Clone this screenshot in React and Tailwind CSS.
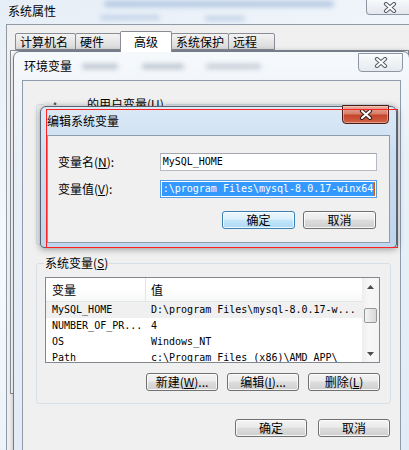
import React from 'react';

const cjk = "font-['Noto_Sans_CJK_SC','Microsoft_YaHei',sans-serif]";
const mono = "font-['DejaVu_Sans_Mono','Noto_Sans_CJK_SC',monospace]";

// little X used on the title bar close buttons
function CloseGlyph({ active }) {
  return (
    <svg width="14" height="11" viewBox="0 0 14 11">
      <path d="M3 2 L11 9 M11 2 L3 9" stroke={active ? '#3b2320' : '#5b6370'} strokeWidth="4.2" strokeLinecap="round" fill="none" />
      <path d="M3 2 L11 9 M11 2 L3 9" stroke="#ffffff" strokeWidth="2" strokeLinecap="round" fill="none" />
    </svg>
  );
}

function Btn({ children, className = '', primary = false }) {
  return (
    <div
      className={`h-[18px] flex items-center justify-center rounded-[3px] border text-[12px] leading-none whitespace-nowrap shadow-[inset_0_0_0_1px_rgba(255,255,255,0.8)] ${
        primary
          ? 'border-[#3c7fb1] bg-[linear-gradient(180deg,#ecf7fd,#dcf1fc_45%,#c4e6fa_50%,#aed9f4)]'
          : 'border-[#707070] bg-[linear-gradient(180deg,#f3f3f3,#ebebeb_45%,#dddddd_50%,#cfcfcf)]'
      } ${className}`}
    >
      {children}
    </div>
  );
}

function Tab({ label, className = '', active = false }) {
  return (
    <div
      className={`flex items-center px-[4px] border border-[#898c95] rounded-t-[2px] text-[12px] leading-none whitespace-nowrap ${
        active
          ? 'relative z-10 h-[21px] -mb-[2px] bg-white border-b-0 justify-center'
          : 'h-[17px] bg-[linear-gradient(180deg,#f3f3f3,#e6e6e6_50%,#d9d9d9)]'
      } ${className}`}
    >
      {label}
    </div>
  );
}

function Arrow({ down }) {
  return (
    <svg width="7" height="4" viewBox="0 0 7 4">
      <path d={down ? 'M0 0 L7 0 L3.5 4 Z' : 'M0 4 L7 4 L3.5 0 Z'} fill="#4b4b4b" />
    </svg>
  );
}

// blurry smudge of whatever sits behind the glass
function Smudge({ className }) {
  return <div className={`absolute rounded-full blur-[2.5px] ${className}`} />;
}

const rows = [
  ['MySQL_HOME', 'D:\\program Files\\mysql-8.0.17-w...', true],
  ['NUMBER_OF_PR...', '4', false],
  ['OS', 'Windows_NT', false],
  ['Path', 'c:\\Program Files (x86)\\AMD APP\\', false],
];

function SysPropsWindow() {
  return (
    <div className="absolute inset-0 flex flex-col">
      <div className="relative h-[24px] pl-[8px] pt-[3px] leading-[16px]">
        <Smudge className="left-[104px] top-[1px] w-[230px] h-[6px] bg-[#b4c8e2]" />
        <Smudge className="left-[100px] top-[15px] w-[60px] h-[5px] bg-[#c2d3e8]" />
        <Smudge className="left-[205px] top-[16px] w-[40px] h-[5px] bg-[#c2d3e8]" />
        <span className="relative">系统属性</span>
        <div className="absolute left-[366px] top-0 w-[47px] h-[15px] rounded-b-[4px] border border-t-0 border-[#8d96a2] bg-[linear-gradient(180deg,#f7f9fb,#e3e8ee)] flex items-center justify-center">
          <CloseGlyph />
        </div>
      </div>
      <div className="ml-[6px] flex-1 border-l border-t border-[#8f9aa6] bg-[#f0f0f0] pt-[7px]">
        <div className="flex items-end h-[18px] pl-[8px]">
          <Tab label="计算机名" className="w-[61px]" />
          <Tab label="硬件" className="w-[46px] -ml-px" />
          <Tab label="高级" className="w-[52px] -ml-px" active />
          <Tab label="系统保护" className="w-[58px] -ml-px" />
          <Tab label="远程" className="w-[47px] -ml-px" />
        </div>
        <div className="ml-[3px] h-[344px] border border-[#898c95] bg-white" />
      </div>
    </div>
  );
}

function EnvWindow() {
  return (
    <div className="absolute left-[13px] top-[51px] w-[397px] h-[420px] rounded-t-[7px] border border-[#6f7d8c] bg-[linear-gradient(180deg,#f6f9fc,#e8eff7_25%,#e2ebf5)] shadow-[0_0_5px_rgba(0,0,0,0.25)]">
      <div className="relative h-[28px] flex items-center pl-[10px] leading-[16px]">
        <Smudge className="left-[68px] top-[12px] w-[36px] h-[5px] bg-[#b9c2cd]" />
        <Smudge className="left-[128px] top-[12px] w-[42px] h-[5px] bg-[#b9c2cd]" />
        <Smudge className="left-[192px] top-[12px] w-[55px] h-[5px] bg-[#c3cbd5]" />
        <span className="relative">环境变量</span>
        <div className="absolute right-[6px] top-[1px] w-[45px] h-[19px] rounded-b-[4px] border border-[#8d96a2] bg-[linear-gradient(180deg,#fafbfc,#e6eaef)] flex items-center justify-center">
          <CloseGlyph />
        </div>
      </div>
      <div className="mx-[8px] h-[400px] border border-[#8d9bab] bg-[#f0f0f0] pl-[13px] pt-[23px]">
        {/* user variables, mostly hidden under the edit dialog */}
        <div className="relative w-[355px] h-[141px] rounded-[3px] border border-[#d5dfe5]">
          <div className="absolute left-[7px] top-[-8px] h-[14px] flex items-center bg-[#f0f0f0] pr-[2px] leading-[14px] whitespace-nowrap">
            <span className="ml-[5px] text-[#555]">·</span>
            <span className="ml-[26px]">的用户变量(<span className="underline">U</span>)</span>
          </div>
        </div>

        {/* system variables */}
        <div className="relative mt-[18px] w-[355px] h-[141px] rounded-[3px] border border-[#d5dfe5]">
          <div className="absolute left-[7px] top-[-8px] h-[14px] px-[1px] flex items-center bg-[#f0f0f0] leading-[14px] whitespace-nowrap">
            系统变量(<span className="underline">S</span>)
          </div>
          <div className="ml-[8px] mt-[13px] w-[335px] h-[86px] border border-[#828790] bg-white flex overflow-hidden">
            <div className="flex-1 flex flex-col">
              <div className="h-[24px] shrink-0 flex border-b border-[#e5e5e5] bg-[linear-gradient(180deg,#ffffff,#ffffff_45%,#f6f7f8)]">
                <div className="w-[100px] pl-[6px] flex items-center border-r border-[#e5e5e5]">变量</div>
                <div className="pl-[5px] flex items-center">值</div>
              </div>
              {rows.map(([k, v, sel]) => (
                <div key={k} className={`h-[16px] shrink-0 flex items-center ${mono} text-[10px] leading-none ${sel ? 'bg-[#f0f0f0]' : ''}`}>
                  <div className="w-[100px] pl-[6px] whitespace-nowrap">{k}</div>
                  <div className="pl-[5px] whitespace-nowrap">{v}</div>
                </div>
              ))}
            </div>
            <div className="w-[17px] shrink-0 flex flex-col bg-[linear-gradient(90deg,#eeeeee,#f7f7f7_40%,#f4f4f4)]">
              <div className="h-[17px] flex items-center justify-center">
                <Arrow />
              </div>
              <div className="mt-[13px] mx-[2px] h-[15px] rounded-[2px] border border-[#979797] bg-[linear-gradient(90deg,#f4f4f4,#e6e6e6_50%,#d8d8d8)]" />
              <div className="flex-1" />
              <div className="h-[17px] flex items-center justify-center">
                <Arrow down />
              </div>
            </div>
          </div>
          <div className="flex justify-end gap-[9px] mt-[10px] pr-[10px]">
            <Btn className="w-[72px]">新建(<span className="underline">W</span>)...</Btn>
            <Btn className="w-[72px]">编辑(<span className="underline">I</span>)...</Btn>
            <Btn className="w-[72px]">删除(<span className="underline">L</span>)</Btn>
          </div>
        </div>

        <div className="w-[354px] flex justify-end gap-[11px] mt-[15px]">
          <Btn className="w-[72px]">确定</Btn>
          <Btn className="w-[72px]">取消</Btn>
        </div>
      </div>
    </div>
  );
}

function EditDialog() {
  return (
    <div className="absolute left-[40px] top-[106px] w-[357px] h-[142px] flex flex-col rounded-t-[6px] rounded-b-[4px] border border-[#566474] bg-[linear-gradient(180deg,#dce9f6,#cadef1_35%,#bfd5ec)] shadow-[0_1px_7px_rgba(0,0,0,0.4)]">
      <div className="relative h-[28px] shrink-0 flex items-center pl-[6px] leading-[16px]">
        <span>编辑系统变量</span>
        <div className="absolute left-[301px] top-[-2px] w-[47px] h-[19px] rounded-b-[4px] border border-[#4a1e16] bg-[linear-gradient(180deg,#eab1a3,#d7806a_45%,#c5452b_55%,#d0634a)] shadow-[inset_0_0_0_1px_rgba(255,210,200,0.5)] flex items-center justify-center">
          <CloseGlyph active />
        </div>
      </div>
      <div className="mx-[6px] h-[108px] shrink-0 border border-[#8d9bab] bg-[#f0f0f0] pt-[17px] pr-[12px]">
        <div className="flex items-center h-[18px]">
          <div className="w-[112px] pl-[10px] leading-[14px] whitespace-nowrap">
            变量名(<span className="underline">N</span>):
          </div>
          <div className={`w-[218px] h-[18px] flex items-center pl-[2px] border border-[#b5bac3] border-t-[#a3a7b0] bg-white ${mono} text-[10px] leading-none`}>
            MySQL_HOME
          </div>
        </div>
        <div className="flex items-center h-[18px] mt-[9px]">
          <div className="w-[112px] pl-[10px] leading-[14px] whitespace-nowrap">
            变量值(<span className="underline">V</span>):
          </div>
          <div className={`w-[218px] h-[18px] flex items-center pl-[1px] border border-[#569de5] bg-white ${mono} text-[10px] leading-none overflow-hidden`}>
            <span className="h-[14px] flex items-center bg-[#3399ff] text-white px-px whitespace-nowrap">
              :\program Files\mysql-8.0.17-winx64
            </span>
            <span className="w-px h-[14px] bg-[#d06010]" />
          </div>
        </div>
        <div className="flex justify-end gap-[8px] mt-[13px] pr-px">
          <Btn className="w-[73px]" primary>确定</Btn>
          <Btn className="w-[73px]">取消</Btn>
        </div>
      </div>
    </div>
  );
}

export default function App() {
  return (
    <div className={`relative w-[409px] h-[450px] overflow-hidden bg-[linear-gradient(160deg,#e6eef7,#f6f9fc_45%,#e4edf6)] text-[12px] text-black ${cjk}`}>
      <SysPropsWindow />
      <EnvWindow />
      <EditDialog />
      {/* red annotation box */}
      <div className="absolute z-50 left-[46px] top-[109px] w-[352px] h-[139px] border border-[#ff2020] pointer-events-none" />
    </div>
  );
}
